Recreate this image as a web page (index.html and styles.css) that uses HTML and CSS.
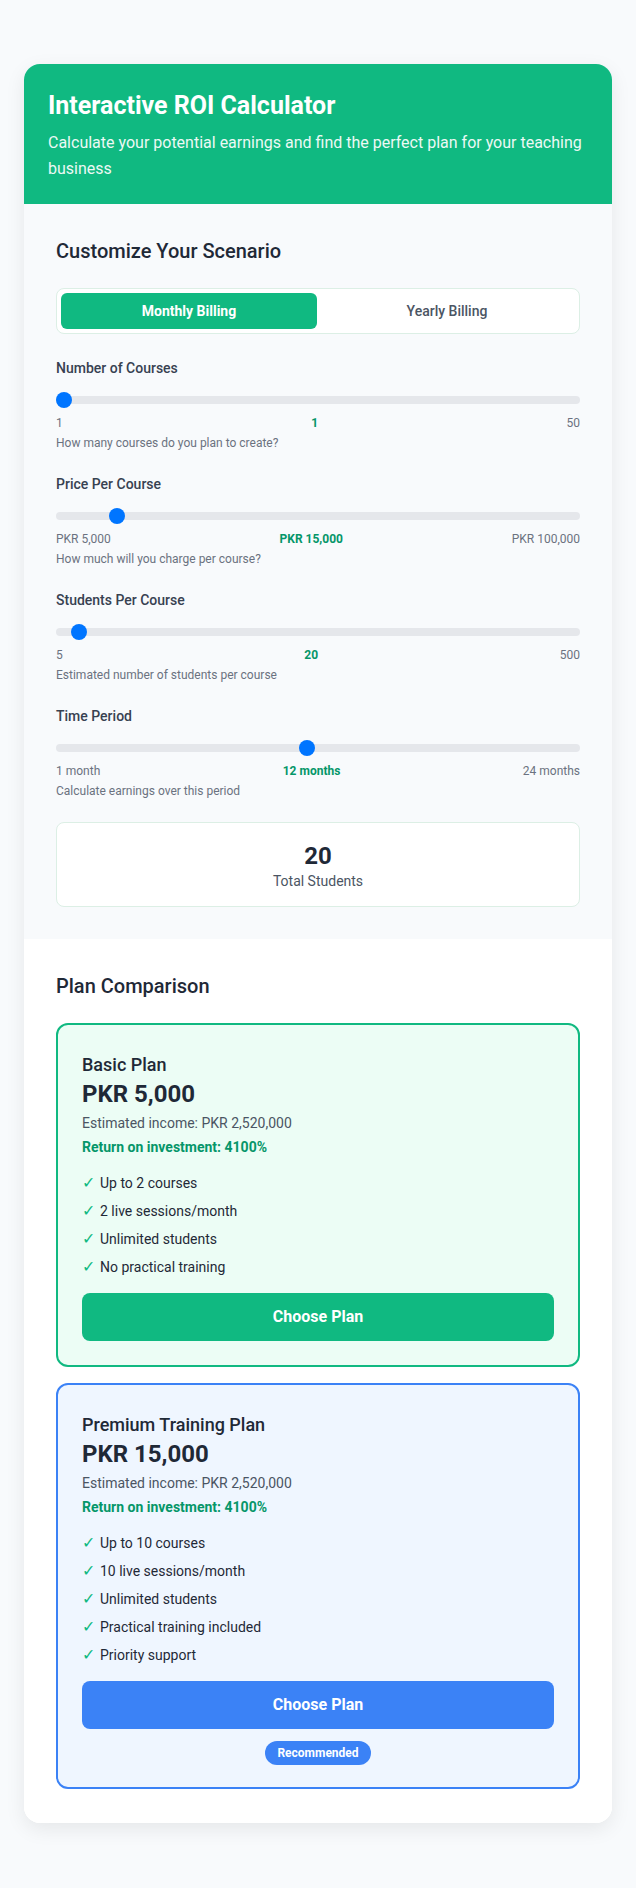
FILE: index.html
```html
<!DOCTYPE html>
<html lang="en">
<head>
  <meta charset="UTF-8">
  <meta name="viewport" content="width=device-width, initial-scale=1.0">
  <title>Interactive ROI Calculator</title>
  <link rel="stylesheet" href="styles.css">
</head>
<body>
  <div class="calculator">
    <header class="calc-header">
      <h1>Interactive ROI Calculator</h1>
      <p>Calculate your potential earnings and find the perfect plan for your teaching business</p>
    </header>

    <section class="scenario">
      <h2 class="section-title">Customize Your Scenario</h2>

      <div class="billing-toggle">
        <button class="billing-btn active">Monthly Billing</button>
        <button class="billing-btn">Yearly Billing</button>
      </div>

      <div class="slider-group">
        <label class="slider-label" for="courses">Number of Courses</label>
        <input class="range" type="range" id="courses" min="1" max="50" value="1">
        <div class="range-values">
          <span>1</span>
          <span class="range-current">1</span>
          <span>50</span>
        </div>
        <p class="slider-help">How many courses do you plan to create?</p>
      </div>

      <div class="slider-group">
        <label class="slider-label" for="price">Price Per Course</label>
        <input class="range" type="range" id="price" min="5000" max="100000" step="1000" value="15000">
        <div class="range-values">
          <span>PKR 5,000</span>
          <span class="range-current">PKR 15,000</span>
          <span>PKR 100,000</span>
        </div>
        <p class="slider-help">How much will you charge per course?</p>
      </div>

      <div class="slider-group">
        <label class="slider-label" for="students">Students Per Course</label>
        <input class="range" type="range" id="students" min="5" max="500" value="20">
        <div class="range-values">
          <span>5</span>
          <span class="range-current">20</span>
          <span>500</span>
        </div>
        <p class="slider-help">Estimated number of students per course</p>
      </div>

      <div class="slider-group">
        <label class="slider-label" for="months">Time Period</label>
        <input class="range" type="range" id="months" min="1" max="24" value="12">
        <div class="range-values">
          <span>1 month</span>
          <span class="range-current">12 months</span>
          <span>24 months</span>
        </div>
        <p class="slider-help">Calculate earnings over this period</p>
      </div>

      <div class="summary-box">
        <div class="summary-number">20</div>
        <div class="summary-label">Total Students</div>
      </div>
    </section>

    <section class="plans">
      <h2 class="section-title">Plan Comparison</h2>

      <div class="plan-card basic">
        <h3 class="plan-name">Basic Plan</h3>
        <div class="plan-price">PKR 5,000</div>
        <p class="plan-income">Estimated income: PKR 2,520,000</p>
        <p class="plan-roi">Return on investment: 4100%</p>
        <ul class="plan-features">
          <li><span class="check">✓</span>Up to 2 courses</li>
          <li><span class="check">✓</span>2 live sessions/month</li>
          <li><span class="check">✓</span>Unlimited students</li>
          <li><span class="check">✓</span>No practical training</li>
        </ul>
        <button class="choose-btn">Choose Plan</button>
      </div>

      <div class="plan-card premium">
        <h3 class="plan-name">Premium Training Plan</h3>
        <div class="plan-price">PKR 15,000</div>
        <p class="plan-income">Estimated income: PKR 2,520,000</p>
        <p class="plan-roi">Return on investment: 4100%</p>
        <ul class="plan-features">
          <li><span class="check">✓</span>Up to 10 courses</li>
          <li><span class="check">✓</span>10 live sessions/month</li>
          <li><span class="check">✓</span>Unlimited students</li>
          <li><span class="check">✓</span>Practical training included</li>
          <li><span class="check">✓</span>Priority support</li>
        </ul>
        <button class="choose-btn">Choose Plan</button>
        <span class="badge">Recommended</span>
      </div>
    </section>
  </div>
</body>
</html>
```
FILE: styles.css
```css
* { margin: 0; padding: 0; box-sizing: border-box; }

body {
  font-family: Roboto, "Liberation Sans", Arial, sans-serif;
  background: #f8fafc;
  color: #1f2937;
  padding: 64px 24px;
}

.calculator {
  background: #fff;
  border-radius: 16px;
  overflow: hidden;
  box-shadow: 0 6px 20px rgba(0,0,0,0.08);
}

.calc-header {
  background: #10b981;
  color: white;
  padding: 24px 24px 23px;
}

.calc-header h1 {
  font-size: 25px;
  font-weight: 700;
  line-height: 35px;
  margin-bottom: 7px;
}

.calc-header p {
  font-size: 16px;
  line-height: 25.6px;
  opacity: 0.92;
}

.scenario {
  background: #f8fafc;
  padding: 32px;
}

.plans {
  background: #fff;
  padding: 32px 32px 34px;
}

.section-title {
  font-size: 20px;
  font-weight: 500;
  line-height: 30px;
  color: #1f2937;
  margin-bottom: 22px;
}

.billing-toggle {
  display: flex;
  gap: 2px;
  padding: 4px;
  background: #fff;
  border: 1px solid #dcefe5;
  border-radius: 8px;
  margin-bottom: 24px;
}

.billing-btn {
  flex: 1;
  border: none;
  background: none;
  font-family: inherit;
  font-size: 14px;
  font-weight: 500;
  line-height: 20px;
  padding: 8px;
  color: #4b5563;
  border-radius: 6px;
  cursor: pointer;
}

.billing-btn.active {
  background: #10b981;
  color: white;
  font-weight: 700;
}

.slider-group {
  margin-bottom: 22.5px;
}

.slider-label {
  display: block;
  font-size: 14px;
  font-weight: 500;
  line-height: 20px;
  color: #374151;
}

.range {
  -webkit-appearance: none;
  appearance: none;
  display: block;
  width: 100%;
  height: 8px;
  background: #e5e7eb;
  border-radius: 4px;
  outline: none;
  margin: 18px 0 9.5px;
}

.range::-webkit-slider-thumb {
  -webkit-appearance: none;
  appearance: none;
  width: 16px;
  height: 16px;
  border-radius: 50%;
  background: #0075ff;
  cursor: pointer;
}

.range-values {
  display: flex;
  justify-content: space-between;
  font-size: 12px;
  line-height: 18px;
  color: #6b7280;
}

.range-current {
  color: #059669;
  font-weight: 700;
}

.slider-help {
  font-size: 12px;
  line-height: 18px;
  color: #6b7280;
  margin-top: 2px;
}

.summary-box {
  background: #fff;
  border: 1px solid #dcefe5;
  border-radius: 8px;
  padding: 18px 16px 15px;
  text-align: center;
}

.summary-number {
  font-size: 24px;
  font-weight: 700;
  line-height: 30px;
  color: #1f2937;
}

.summary-label {
  font-size: 14px;
  line-height: 20px;
  color: #4b5563;
}

.plan-card {
  border: 2px solid;
  border-radius: 12px;
  padding: 24px;
  margin-bottom: 16px;
}

.plan-card:last-child {
  margin-bottom: 0;
}

.plan-card.basic {
  background: #ecfdf5;
  border-color: #10b981;
}

.plan-card.premium {
  background: #eff6ff;
  border-color: #3b82f6;
  padding-bottom: 22px;
}

.plan-name {
  font-size: 18px;
  font-weight: 500;
  line-height: 31px;
  color: #1f2937;
}

.plan-price {
  font-size: 24px;
  font-weight: 700;
  line-height: 28.8px;
  color: #1f2937;
}

.plan-income {
  font-size: 14px;
  line-height: 20px;
  color: #4b5563;
  margin-top: 4px;
}

.plan-roi {
  font-size: 14px;
  line-height: 20px;
  font-weight: 700;
  color: #059669;
  margin-top: 4px;
}

.plan-features {
  list-style: none;
  margin: 16px 0;
  display: flex;
  flex-direction: column;
  gap: 8px;
}

.plan-features li {
  display: flex;
  align-items: center;
  font-size: 14px;
  line-height: 20px;
  color: #1f2937;
}

.check {
  width: 18px;
  font-size: 16px;
  color: #10b981;
  flex-shrink: 0;
}

.choose-btn {
  display: block;
  width: 100%;
  border: none;
  border-radius: 8px;
  padding: 14px;
  font-family: inherit;
  font-size: 16px;
  font-weight: 700;
  line-height: 20px;
  color: white;
  cursor: pointer;
}

.basic .choose-btn { background: #10b981; }
.premium .choose-btn { background: #3b82f6; }

.badge {
  display: block;
  width: fit-content;
  margin: 12px auto 0;
  background: #3b82f6;
  color: white;
  font-size: 12px;
  font-weight: 700;
  line-height: 16px;
  padding: 4px 12px;
  border-radius: 12px;
}
```
